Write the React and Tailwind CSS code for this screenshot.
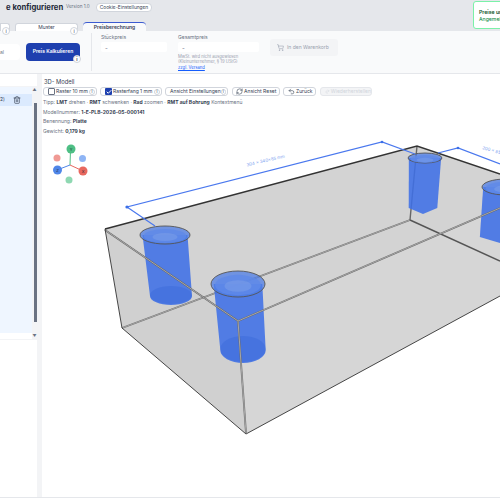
import { ShoppingCart, RefreshCw, Undo2, Redo2, Trash2, Check } from 'lucide-react'

const font = { fontFamily: 'Inter' }

function Info({ className = '' }) {
  return (
    <span className={`absolute flex h-2 w-2 items-center justify-center rounded-full border border-gray-300 bg-white text-[5px] leading-none text-gray-700 ${className}`}>i</span>
  )
}

function ToolButton({ children, className = '' }) {
  return (
    <div className={`flex h-[9px] shrink-0 items-center whitespace-nowrap rounded-[3px] border border-gray-300 bg-white text-[5px] leading-none text-gray-700 ${className}`}>
      {children}
    </div>
  )
}

function SmallInfo() {
  return <span className="ml-auto mr-[1px] flex h-[6px] w-[6px] items-center justify-center rounded-full border border-gray-300 text-[4px]">i</span>
}

// Blue bore with translucent body and rim
function Bore({ x, y, rx, ry, h, dx = 0, tip }) {
  const by = y + h
  const bx = x + dx
  const br = rx * 0.84
  return (
    <g>
      <path
        d={tip
          ? `M${x - rx * 0.95} ${y} L${bx - br} ${by} L${bx} ${by + 6} L${bx + br} ${by} L${x + rx * 0.95} ${y} Z`
          : `M${x - rx * 0.9} ${y} L${bx - br} ${by} A${br} ${ry} 0 0 0 ${bx + br} ${by} L${x + rx * 0.9} ${y} Z`}
        fill="#3f6fe6"
        fillOpacity="0.88"
      />
      {!tip && <ellipse cx={bx} cy={by - 1} rx={br} ry={ry} fill="#2f5fd4" fillOpacity="0.3" />}
      <ellipse cx={x} cy={y} rx={rx} ry={ry} fill="#4f7de6" fillOpacity="0.75" stroke="#555" strokeWidth="0.9" />
      <ellipse cx={x} cy={y + 1} rx={rx * 0.85} ry={ry * 0.78} fill="#5f8ae8" fillOpacity="0.8" />
      <ellipse cx={x} cy={y + 2} rx={rx * 0.5} ry={ry * 0.45} fill="#7b9fe8" fillOpacity="0.55" />
    </g>
  )
}

function Triad() {
  return (
    <g fontFamily="Inter" fontSize="4" textAnchor="middle" fill="#1f2937">
      <line x1="70" y1="165" x2="70.5" y2="150" stroke="#4ebf85" strokeWidth="1" />
      <line x1="70" y1="165" x2="57" y2="170" stroke="#4f86e8" strokeWidth="1" />
      <line x1="70" y1="165" x2="83" y2="171" stroke="#e8685f" strokeWidth="1" />
      <circle cx="71" cy="149" r="4.5" fill="#4ebf85" />
      <circle cx="57.5" cy="170" r="4.5" fill="#4f86e8" />
      <circle cx="83" cy="171" r="4.5" fill="#e8685f" />
      <circle cx="57" cy="158" r="3.5" fill="#f09a94" />
      <circle cx="82.5" cy="158.5" r="3.5" fill="#8fb5f5" />
      <circle cx="69" cy="180" r="3.5" fill="#8fd8b2" />
      <text x="71" y="150.5">Y</text>
      <text x="57.5" y="171.5">Z</text>
      <text x="83" y="172.5">X</text>
    </g>
  )
}

function DoubleLine({ d }) {
  return (
    <g fill="none">
      <path d={d} stroke="#666" strokeWidth="1.8" />
      <path d={d} stroke="#d2d2d2" strokeWidth="0.6" />
    </g>
  )
}

function Model() {
  return (
    <svg className="mt-[3px] block h-[359px] w-[458px] shrink-0" viewBox="42 138 458 359">
      <Triad />
      {/* Box faces */}
      <polygon points="105,229 417,146 500,174 500,208 238,320" fill="#d3d3d3" />
      <polygon points="105,229 238,320 246,434 122,328" fill="#d0d0d0" />
      <polygon points="238,320 500,208 500,296 246,434" fill="#d6d6d6" />
      {/* Far edges seen through the part */}
      <DoubleLine d="M122 328 L410 220" />
      <path d="M410 220 L500 261" fill="none" stroke="#555" strokeWidth="1.4" />
      <path d="M417 146 L410 220" fill="none" stroke="#666" strokeWidth="1.4" />
      <Bore x={165} y={235} rx={25} ry={9} h={61} dx={6} />
      <Bore x={238} y={284} rx={27} ry={13} h={66} dx={5} />
      <Bore x={425} y={158} rx={17} ry={5} h={50} dx={-2} tip />
      <Bore x={506} y={187} rx={24} ry={8} h={50} dx={-6} tip />
      {/* Near edges */}
      <DoubleLine d="M105 230 L238 321 L500 208" />
      <DoubleLine d="M238 321 L246 433" />
      <g fill="none" stroke="#333" strokeWidth="1.4">
        <path d="M105 229 L417 146 L500 174" />
      </g>
      <path d="M105 229 L122 328 L246 434 L500 296" fill="none" stroke="#333" strokeWidth="0.9" />
      {/* Dimension lines */}
      <g fill="none" stroke="#4a78ee" strokeWidth="1.2">
        <path d="M155 226 L127 207 L382 142 L415 154" />
        <path d="M438 153 L458 148 L500 164" />
      </g>
      <circle cx="127" cy="207" r="1.6" fill="#3b6fe8" />
      <circle cx="382" cy="142" r="1.3" fill="#3b6fe8" />
      <circle cx="458" cy="148" r="1.3" fill="#3b6fe8" />
      <text x="266" y="162" fontFamily="Inter" fontSize="4.4" fill="#7d9ff0" transform="rotate(-13 266 162)" textAnchor="middle">304 × 340x85 mm</text>
      <text x="482" y="149" fontFamily="Inter" fontSize="4.4" fill="#7d9ff0" transform="rotate(16 482 149)">200 × 85 mm</text>
    </svg>
  )
}

export default function App() {
  return (
    <div className="flex h-[500px] w-[500px] flex-col overflow-hidden bg-white" style={font}>
      {/* Title bar */}
      <div className="relative h-[31px] shrink-0 bg-[#e5e7eb]">
        <div className="flex h-[15px] items-center whitespace-nowrap pl-[6px]">
          <span className="w-[60px] text-[7.7px] font-bold leading-none text-gray-800">e konfigurieren</span>
          <span className="w-[30px] text-[4.6px] text-gray-500">Version 1.0</span>
          <span className="flex h-[9px] w-[56px] items-center justify-center rounded-[4px] border border-gray-300 bg-white text-[4.8px] text-gray-700">Cookie-Einstellungen</span>
        </div>
        <div className="absolute left-0 top-[21px] flex h-[10px] items-end text-[5px] leading-none text-gray-700">
          <div className="relative h-[8px] w-[10px] rounded-tr-[3px] border border-b-0 border-gray-300 bg-white"><Info className="-right-[1px] top-[3px]" /></div>
          <div className="relative ml-[5px] flex h-[8px] w-[63px] items-center justify-center rounded-t-[3px] border border-b-0 border-gray-300 bg-white">Muster<Info className="-right-[1px] top-[3px]" /></div>
          <div className="ml-[5px] flex h-[9px] w-[63px] items-center justify-center rounded-t-[4px] border-t border-[#3b5bd0] bg-[#f9fafb] font-semibold">Preisberechnung</div>
        </div>
        <div className="absolute left-[473px] top-[1px] h-[28px] w-[40px] whitespace-nowrap rounded-[3px] border-[1.5px] border-green-300 bg-white pl-[5px] pt-[7px] text-[5.2px] leading-[6.5px]">
          <div className="font-semibold text-green-900">Preise und</div>
          <div className="text-green-700">Angemeldet</div>
        </div>
      </div>

      {/* Price bar */}
      <div className="flex h-[43px] shrink-0 border-b border-gray-200 bg-[#f9fafb]">
        <div className="flex w-[91px] items-center">
          <div className="h-[16px] w-[20px] rounded-r-[4px] bg-white pt-[5px] text-[5px] text-gray-500">al</div>
          <div className="relative ml-[6px] flex h-[18px] w-[54px] items-center justify-center rounded-[4px] bg-[#1e40af] text-[5px] font-semibold text-white">
            Preis Kalkulieren
            <Info className="-bottom-[2px] right-[-1px]" />
          </div>
        </div>
        <div className="my-[2px] w-px bg-gray-200" />
        <div className="ml-[9px] w-[77px] pt-[3px]">
          <div className="text-[5px] leading-[6px] text-gray-500">Stückpreis</div>
          <div className="mt-[2px] flex h-[10px] w-[66px] items-center rounded-[2px] bg-white pl-[4px] text-[6px] text-gray-500">-</div>
        </div>
        <div className="w-[85px] pt-[3px]">
          <div className="text-[5px] leading-[6px] text-gray-500">Gesamtpreis</div>
          <div className="mt-[2px] flex h-[10px] w-[81px] items-center rounded-[2px] bg-white pl-[4px] text-[6px] text-gray-500">-</div>
          <div className="mt-[2px] whitespace-nowrap text-[4.2px] leading-[5px] text-gray-400">MwSt. wird nicht ausgewiesen<br />(Kleinunternehmer, § 19 UStG)</div>
          <div className="mt-[1px] text-[4.2px] leading-[5px] text-blue-600 underline">zzgl. Versand</div>
        </div>
        <div className="ml-[7px] mt-[8px] flex h-[17px] w-[68px] items-center gap-[3px] rounded-[3px] bg-gray-100 pl-[7px] text-[5px] text-gray-400">
          <ShoppingCart size={7} />
          In den Warenkorb
        </div>
      </div>

      {/* Main */}
      <div className="flex min-h-0 flex-1">
        <div className="flex w-[37px] shrink-0 flex-col">
          <div className="flex h-[266px] flex-col border-b border-gray-100">
            <div className="flex h-[13px] shrink-0 border-b border-gray-100" />
            <div className="flex min-h-0 flex-1">
              <div className="h-[246px] w-[32px] bg-[#eff6ff] pt-[7px]">
                <div className="flex h-[12px] items-center justify-between bg-[#dbeafe] pr-[11px] text-[5px] text-gray-700">
                  <span className="whitespace-nowrap">2)</span>
                  <Trash2 size={8} />
                </div>
              </div>
              <div className="flex w-[5px] flex-col items-center bg-gray-100">
                <span className="text-[4px] leading-[6px] text-gray-500">▲</span>
                <div className="ml-[1px] mt-[10px] h-[220px] w-[3px] bg-gray-500" />
                <span className="mt-[11px] text-[4px] leading-[6px] text-gray-500">▼</span>
              </div>
            </div>
          </div>
          <div className="flex-1" />
        </div>
        <div className="w-[5px] shrink-0 bg-gray-100" />
        <div className="flex min-w-0 flex-1 flex-col pt-[3px]">
          <div className="h-[9px] pl-[2px] text-[5.8px] leading-[9px] text-gray-700">3D- Modell</div>
          <div className="mt-[1px] flex gap-[3px] pl-[1px]">
            <ToolButton className="w-[54px] pl-[4px]"><span className="mr-[1px] h-[7px] w-[7px] rounded-[1px] border border-gray-500 bg-white" />Raster 10 mm<SmallInfo /></ToolButton>
            <ToolButton className="w-[62px] pl-[4px]"><span className="mr-[1px] flex h-[7px] w-[7px] items-center justify-center rounded-[1px] bg-[#1e40af] text-white"><Check size={6} strokeWidth={4} /></span>Rasterfang 1 mm<SmallInfo /></ToolButton>
            <ToolButton className="w-[63px] pl-[4px]">Ansicht Einstellungen<SmallInfo /></ToolButton>
            <ToolButton className="ml-[1px] w-[48px] gap-[1px] pl-[3px]"><RefreshCw size={7} />Ansicht Reset</ToolButton>
            <ToolButton className="w-[33px] gap-[1px] pl-[4px]"><Undo2 size={7} />Zurück</ToolButton>
            <ToolButton className="ml-[1px] w-[52px] gap-[1px] !border-gray-200 !bg-gray-100 pl-[4px] !text-gray-300"><Redo2 size={7} />Wiederherstellen</ToolButton>
          </div>
          <div className="mt-[2px] flex flex-col gap-[1.67px] pl-[1px] text-[5px] leading-[8px] text-gray-500">
            <div className="whitespace-nowrap">Tipp: <b className="text-gray-700">LMT</b> drehen · <b className="text-gray-700">RMT</b> schwenken · <b className="text-gray-700">Rad</b> zoomen · <b className="text-gray-700">RMT auf Bohrung</b> Kontextmenü</div>
            <div>Modellnummer: <b className="text-gray-700">1-E-PLB-2026-05-000141</b></div>
            <div>Benennung: <b className="text-gray-700">Platte</b></div>
            <div>Gewicht: <b className="text-gray-700">0,179 kg</b></div>
          </div>
          <Model />
        </div>
      </div>
      <div className="h-[3px] shrink-0 border-t border-gray-200 bg-white" />
    </div>
  )
}
